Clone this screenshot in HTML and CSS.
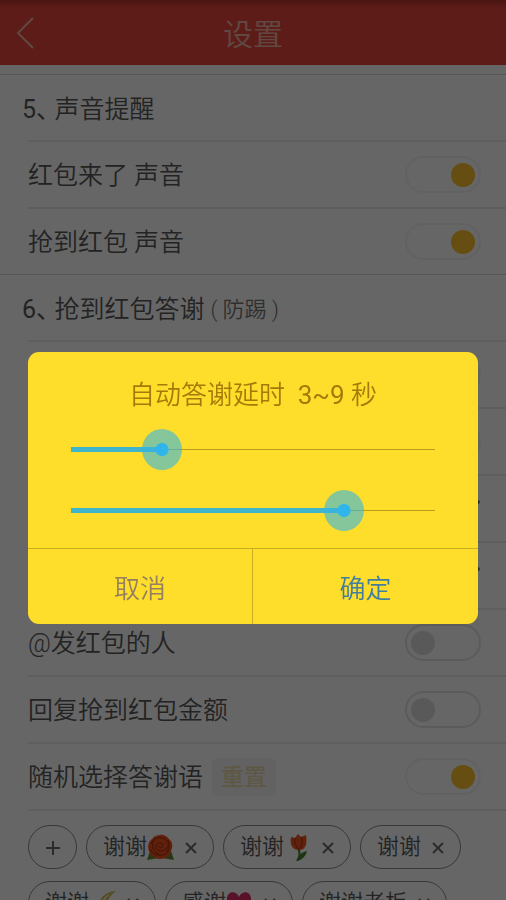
FILE: index.html
```html
<!DOCTYPE html>
<html lang="zh-CN">
<head>
<meta charset="utf-8">
<meta name="viewport" content="width=device-width, initial-scale=1">
<title>设置</title>
<link rel="stylesheet" href="styles.css">
</head>
<body>
<div class="app">
  <header class="bar">
    <button class="back" type="button" aria-label="返回">
      <svg width="20" height="34" viewBox="0 0 20 34" fill="none" stroke="currentColor" stroke-width="2"><path d="M17 2 2 17 17 32"/></svg>
    </button>
    <h1 class="bar-title">设置</h1>
  </header>
  <main class="settings">
    <section class="group">
      <h2 class="group-title"><span class="num">5、</span>声音提醒</h2>
      <div class="row"><label for="s1">红包来了 声音</label><input class="switch" id="s1" type="checkbox" checked></div>
      <div class="row"><label for="s2">抢到红包 声音</label><input class="switch" id="s2" type="checkbox" checked></div>
    </section>
    <section class="group">
      <h2 class="group-title"><span class="num">6、</span>抢到红包答谢<small class="note"><span>(</span>防踢<span>)</span></small></h2>
      <div class="row"><input class="switch" type="checkbox" aria-label="自动答谢" checked></div>
      <div class="row"><input class="switch" type="checkbox" aria-label="答谢延时" checked></div>
      <div class="row"><svg class="chevron" viewBox="0 0 12 22"><path d="M1 1 11 11 1 21"/></svg></div>
      <div class="row"><svg class="chevron" viewBox="0 0 12 22"><path d="M1 1 11 11 1 21"/></svg></div>
      <div class="row"><label for="s5">@发红包的人</label><input class="switch" id="s5" type="checkbox"></div>
      <div class="row"><label for="s6">回复抢到红包金额</label><input class="switch" id="s6" type="checkbox"></div>
      <div class="row"><label for="s7">随机选择答谢语</label><button class="reset" type="button">重置</button><input class="switch" id="s7" type="checkbox" checked></div>
      <div class="chips">
        <button class="chip add" type="button" aria-label="添加"><svg width="14" height="14" viewBox="0 0 14 14"><path d="M7 0V14M0 7H14"/></svg></button>
        <div class="chip">谢谢<svg class="emoji" viewBox="0 0 27 27">
          <path fill="#5d8a34" d="M4 14 0 26 12 24 15 24 27 26 23 14Z"/>
          <path fill="#f0501e" d="M13 1C16 0 20 2 22 5 26 8 26 13 24 17 23 22 18 25 13 25 8 25 3 21 2 17 0 12 2 7 5 5 7 2 10 1 13 1Z"/>
          <g fill="none" stroke="#9c3010" stroke-width="1"><path d="M4 10C6 4 13 2 18 5 23 8 22 14 18 16 14 18 8 16 9 12 10 8 16 8 16 12 15 14 12 14 12 12"/><path d="M3 15C6 22 16 24 22 17M7 6C4 11 6 18 12 20M21 6C22 10 23 13 20 18"/></g></svg>
          <button class="remove" type="button" aria-label="删除"><svg viewBox="0 0 12 12"><path d="M1 1 11 11M11 1 1 11"/></svg></button></div>
        <div class="chip">谢谢<svg class="emoji" viewBox="0 0 27 27">
          <path fill="none" stroke="#49822d" stroke-width="2" d="M14 14C16 18 16 23 13 27"/>
          <path fill="#49822d" d="M13 27C14 21 18 18 23 17 22 22 18 26 13 27Z"/>
          <path fill="#f0561e" d="M7 3 11 4 14 0 17 3 22 1C23 8 23 16 15 16 7 16 6 9 7 3Z"/>
          <path fill="none" stroke="#a62d0e" stroke-width="1" d="M11 4C10 9 12 13 15 15M17 3C19 8 18 13 15 15"/></svg>
          <button class="remove" type="button" aria-label="删除"><svg viewBox="0 0 12 12"><path d="M1 1 11 11M11 1 1 11"/></svg></button></div>
        <div class="chip">谢谢<button class="remove" type="button" aria-label="删除"><svg viewBox="0 0 12 12"><path d="M1 1 11 11M11 1 1 11"/></svg></button></div>
        <div class="chip">谢谢<svg class="emoji" viewBox="0 0 27 27"><path fill="#d5bd55" d="M27 1C19 1 10 7 9 16 8 22 12 26 18 26 14 21 16 9 27 1Z"/><path fill="#fff" d="M22 3C14 7 11 13 12 20 13 13 17 7 22 3Z"/></svg>
          <button class="remove" type="button" aria-label="删除"><svg viewBox="0 0 12 12"><path d="M1 1 11 11M11 1 1 11"/></svg></button></div>
        <div class="chip">感谢<svg class="emoji" viewBox="0 0 27 27"><path fill="#d92c65" d="M13 25C4 19 1 14 1 9 1 1 10 0 13 7 16 0 25 1 25 9 25 14 21 20 13 25Z"/></svg>
          <button class="remove" type="button" aria-label="删除"><svg viewBox="0 0 12 12"><path d="M1 1 11 11M11 1 1 11"/></svg></button></div>
        <div class="chip">谢谢老板<button class="remove" type="button" aria-label="删除"><svg viewBox="0 0 12 12"><path d="M1 1 11 11M11 1 1 11"/></svg></button></div>
      </div>
    </section>
  </main>
</div>
<div class="overlay">
  <div class="dialog" role="dialog" aria-labelledby="dlg-title">
    <h2 class="dialog-title" id="dlg-title">自动答谢延时&nbsp; <span class="range">3~9</span> 秒</h2>
    <div class="sliders">
      <input class="slider" type="range" min="0" max="12" value="3" aria-label="最短延时" style="--fill:25%">
      <input class="slider" type="range" min="0" max="12" value="9" aria-label="最长延时" style="--fill:75%">
    </div>
    <div class="actions">
      <button class="cancel" type="button">取消</button>
      <button class="confirm" type="button">确定</button>
    </div>
  </div>
</div>
</body>
</html>
```
FILE: styles.css
```css
* { box-sizing: border-box; }

body {
  margin: 0;
  overflow: hidden;
  font-family: Roboto, "Noto Sans CJK SC", sans-serif;
  font-weight: 350;
  color: #585858;
}

button {
  padding: 0;
  border: 0;
  background: none;
  font: inherit;
  color: inherit;
}

h1, h2 { margin: 0; font-weight: inherit; }

.app {
  height: 100vh;
  overflow: hidden;
  background: #fff;
}

.bar {
  display: grid;
  grid-template-columns: 48px 1fr 48px;
  align-items: center;
  height: 65px;
  background: linear-gradient(#b5362e, #eb463c 8px);
  color: #efb5a6;
}

.back {
  display: flex;
  padding-left: 16px;
}

.bar-title {
  padding-top: 4px;
  font-size: 30px;
  line-height: 40px;
  text-align: center;
}

.settings {
  padding-top: 9px;
  background: #fcfffd;
}

.group {
  border-top: 1px solid #dcd3dc;
  background: #fff;
}

.group-title,
.row {
  display: flex;
  align-items: center;
  font-size: 25px;
  line-height: 36px;
}

.group-title {
  height: 65px;
  padding: 4px 0 0 22px;
}

.num {
  padding-right: 6px;
  font-weight: 400;
  font-feature-settings: "halt";
}

.note {
  display: flex;
  gap: 5px;
  padding-left: 6px;
  font-size: 22px;
  color: #777;
}

.row {
  height: 67px;
  margin-left: 28px;
  padding-right: 25px;
  border-top: 2px solid #eaeaea;
}

.row label { padding-top: 3px; }

.switch {
  display: flex;
  align-items: center;
  appearance: none;
  width: 76px;
  height: 37px;
  margin: 0 0 0 auto;
  padding: 0 4px;
  border: 2px solid #e3e3e3;
  border-radius: 19px;
}

.switch::before {
  content: "";
  width: 24px;
  height: 24px;
  border-radius: 50%;
  background: #dedede;
}

.switch:checked {
  justify-content: flex-end;
  border-color: #f3f3f3;
}

.switch:checked::before { background: #ffc02f; }

.chevron {
  width: 12px;
  height: 22px;
  margin: 0 1px 14px auto;
  fill: none;
  stroke: #777;
  stroke-width: 2;
}

.reset {
  height: 38px;
  margin-left: 9px;
  padding: 2px 9px 0;
  border-radius: 5px;
  background: #f5f5f5;
  font-size: 23px;
  font-weight: 500;
  color: #ebd9a8;
}

.chips {
  display: flex;
  flex-wrap: wrap;
  gap: 12px 9px;
  margin-left: 28px;
  padding: 14px 16px 15px 0;
  border-top: 2px solid #eaeaea;
}

.chip {
  display: flex;
  align-items: center;
  height: 44px;
  padding: 0 16px;
  border: 1px solid #8c8c8c;
  border-radius: 22px;
  font-size: 22px;
  line-height: 30px;
}

.add {
  justify-content: center;
  width: 49px;
  padding: 2px 0 0;
}

.add svg, .remove svg {
  fill: none;
  stroke: #6c6c6c;
  stroke-width: 2;
}

.emoji { width: 27px; height: 27px; }

.remove {
  display: flex;
  width: 12px;
  height: 12px;
  margin: 2px 0 0 11px;
}

.overlay {
  position: fixed;
  inset: 0;
  display: flex;
  align-items: center;
  padding: 76px 28px 0;
  background: rgba(0, 0, 0, 0.6);
}

.dialog {
  width: 100%;
  overflow: hidden;
  border-radius: 11px;
  background: #ffde2b;
}

.dialog-title {
  padding: 25px 0 16px;
  font-size: 26px;
  line-height: 36px;
  text-align: center;
  color: #a57a08;
}

.range { font-weight: 400; }

.sliders {
  display: grid;
  gap: 20px;
  padding: 0 23px 17px;
}

.slider {
  appearance: none;
  width: 100%;
  height: 41px;
  margin: 0;
  background:
    linear-gradient(#40b4cb, #40b4cb) left center / var(--fill) 5px no-repeat content-box,
    linear-gradient(#b59d20, #b59d20) center / 100% 1px no-repeat content-box;
  padding: 0 20px;
}

.slider::-webkit-slider-runnable-track { margin: 0 -20px; }

.slider::-webkit-slider-thumb {
  appearance: none;
  width: 40px;
  height: 41px;
  border-radius: 50%;
  background: radial-gradient(circle, #2fb4ec 6px, rgba(51, 181, 229, 0.6) 7px);
}

.actions {
  display: grid;
  grid-template-columns: 1fr 1fr;
  height: 76px;
  border-top: 1px solid #c9ae22;
  font-size: 26px;
}

.cancel {
  border-right: 1px solid #c9ae22;
  color: #948060;
}

.confirm { color: #407f9f; }
```
